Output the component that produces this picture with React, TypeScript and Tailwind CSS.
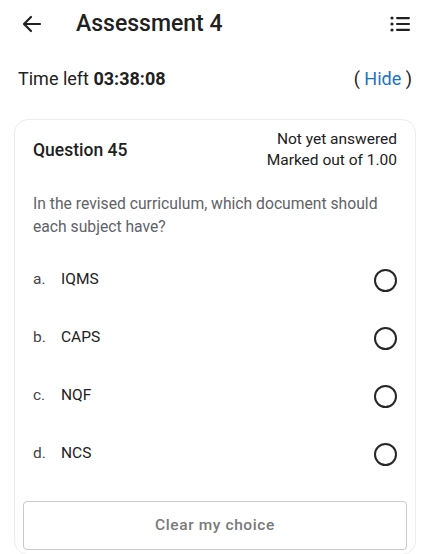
import React from "react";

const options = [
  { letter: "a.", label: "IQMS" },
  { letter: "b.", label: "CAPS" },
  { letter: "c.", label: "NQF" },
  { letter: "d.", label: "NCS" },
];

const ArrowBack = () => (
  <svg width="24" height="24" viewBox="0 0 24 24" fill="none">
    <path
      d="M20 12H4.5M11 5l-7 7 7 7"
      stroke="#212121"
      strokeWidth="2.2"
      strokeLinecap="round"
      strokeLinejoin="round"
    />
  </svg>
);

const ListIcon = () => (
  <svg width="24" height="24" viewBox="0 0 24 24" fill="#212121">
    <circle cx="4" cy="6" r="1.6" />
    <circle cx="4" cy="12" r="1.6" />
    <circle cx="4" cy="18" r="1.6" />
    <rect x="8" y="5" width="14" height="2.2" rx="1.1" />
    <rect x="8" y="10.9" width="14" height="2.2" rx="1.1" />
    <rect x="8" y="16.8" width="14" height="2.2" rx="1.1" />
  </svg>
);

export default function App() {
  return (
    <div className="w-[430px] h-[554px] overflow-hidden bg-white font-['Roboto',sans-serif]">
      <header className="h-12 flex items-center pl-5 pr-[18px]">
        <ArrowBack />
        <h1 className="ml-[32px] text-[23px] font-medium text-[#212121] flex-1">
          Assessment 4
        </h1>
        <ListIcon />
      </header>

      <div className="h-[60px] flex items-center justify-between px-[18px] text-[18px] text-[#212121]">
        <p>
          Time left <span className="font-bold">03:38:08</span>
        </p>
        <p>
          ( <span className="text-[#1a73c8]">Hide</span> )
        </p>
      </div>

      <div className="mt-[11px] mx-[14px] border border-[#ececec] rounded-[14px] pt-[9px] pb-1">
        <div className="flex items-center justify-between px-[18px]">
          <h2 className="text-[17.5px] font-medium text-[#212121]">Question 45</h2>
          <div className="text-right text-[15.5px] leading-[21px] text-[#212121]">
            <p>Not yet answered</p>
            <p>Marked out of 1.00</p>
          </div>
        </div>

        <p className="mt-[21px] px-[18px] text-[15.7px] leading-[23px] text-[#5f6368]">
          In the revised curriculum, which document should each subject have?
        </p>

        <ul className="mt-[13px]">
          {options.map((o) => (
            <li key={o.letter} className="h-[58px] flex items-center px-[18px] text-[15.5px]">
              <span className="w-7 text-[#444]">{o.letter}</span>
              <span className="flex-1 text-[#212121]">{o.label}</span>
              <span className="w-[23px] h-[23px] rounded-full border-2 border-[#262626]" />
            </li>
          ))}
        </ul>

        <div className="px-2 mt-[18px]">
          <button className="w-full h-[49px] rounded border border-[#c9c9c9] text-[15.5px] font-medium tracking-[0.6px] text-[#7a7a7a]">
            Clear my choice
          </button>
        </div>
      </div>
    </div>
  );
}
